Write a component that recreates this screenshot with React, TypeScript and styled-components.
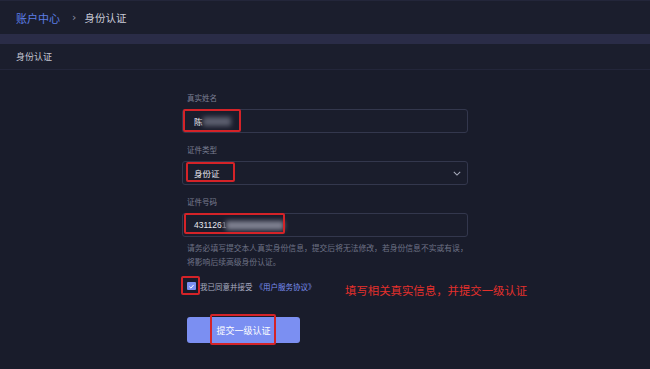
import React, { useState } from 'react';
import styled, { createGlobalStyle } from 'styled-components';

const GlobalStyle = createGlobalStyle`
  html, body {
    margin: 0;
    padding: 0;
    background: #191c2b;
  }
  body {
    font-family: "Noto Sans CJK SC", "Noto Sans", sans-serif;
  }
`

const App: React.FC = () => {
  const [agreed, setAgreed] = useState<boolean>(true)

  return (
    <Page>
      <GlobalStyle />
      <Header>
        <Crumb>账户中心</Crumb>
        <CrumbSep>›</CrumbSep>
        <CrumbCurrent>身份认证</CrumbCurrent>
      </Header>
      <Stripe />
      <SectionTitle>身份认证</SectionTitle>

      <Form>
        <Field>
          <Label>真实姓名</Label>
          <InputBox>
            <Value>陈<Blur width={28} tone="#6d7080" /></Value>
            <Mark left={0} top={-1} width={58} height={23} />
          </InputBox>
        </Field>

        <Field>
          <Label>证件类型</Label>
          <InputBox>
            <Value>身份证</Value>
            <Chevron viewBox="0 0 10 6" width="8" height="5">
              <path d="M1 1 L5 5 L9 1" fill="none" stroke="#a9acbd" strokeWidth="1.3" />
            </Chevron>
            <Mark left={3} top={0} width={49} height={20} />
          </InputBox>
        </Field>

        <Field>
          <Label>证件号码</Label>
          <InputBox>
            <Value>431126<Faded>1</Faded><Blur width={58} tone="#9a9cab" /></Value>
            <Mark left={1} top={-1} width={101} height={21} />
          </InputBox>
          <Hint>
            请务必填写提交本人真实身份信息，提交后将无法修改，若身份信息不实或有误，
            <br />
            将影响后续高级身份认证。
          </Hint>
        </Field>

        <AgreeRow>
          <CheckBox checked={agreed} onClick={() => setAgreed(!agreed)}>
            {agreed && (
              <svg viewBox="0 0 10 10" width="7" height="7">
                <path d="M2 5.2 L4.2 7.3 L8 2.8" fill="none" stroke="#ffffff" strokeWidth="1.4" />
              </svg>
            )}
          </CheckBox>
          <AgreeText>我已同意并接受</AgreeText>
          <AgreeLink>《用户服务协议》</AgreeLink>
          <Mark left={-1} top={-4} width={19} height={19} />
          <Note>填写相关真实信息，并提交一级认证</Note>
        </AgreeRow>

        <SubmitButton>
          提交一级认证
          <Mark left={23} top={-3} width={66} height={31} />
        </SubmitButton>
      </Form>
    </Page>
  );
}

const Page = styled.div`
  width: 650px;
  height: 369px;
  background: #191c2b;
  overflow: hidden;
`

const Header = styled.div`
  height: 34px;
  display: flex;
  align-items: center;
  padding-left: 16px;
  background: #1b1e2d;
  border-top: 1px solid #23263a;
  box-sizing: border-box;
`

const Crumb = styled.span`
  color: #5d7fe6;
  font-size: 11px;
`

const CrumbSep = styled.span`
  color: #8d90a3;
  font-size: 11px;
  margin: 0 8px 0 12px;
  font-family: "DejaVu Sans", sans-serif;
`

const CrumbCurrent = styled.span`
  color: #c9cbd8;
  font-size: 10.5px;
`

const Stripe = styled.div`
  height: 10px;
  background: #2a2c47;
`

const SectionTitle = styled.div`
  height: 25px;
  display: flex;
  align-items: center;
  padding-left: 16px;
  font-size: 9px;
  color: #c4c6d3;
  background: #1b1e2d;
  border-bottom: 1px solid #23263a;
`

const Form = styled.div`
  width: 286px;
  margin: 23px auto 0;
  display: flex;
  flex-direction: column;
`

const Field = styled.div`
  display: flex;
  flex-direction: column;
  margin-bottom: 12px;
`

const Label = styled.div`
  height: 10px;
  line-height: 10px;
  font-size: 7.5px;
  color: #7b7f93;
  padding-left: 5px;
  margin-bottom: 6px;
`

const InputBox = styled.div`
  position: relative;
  height: 24px;
  box-sizing: border-box;
  border: 1px solid #33374d;
  border-radius: 3px;
  background: #1a1d2c;
  display: flex;
  align-items: center;
  justify-content: space-between;
  padding: 0 6px 0 11px;
`

const Value = styled.span`
  display: flex;
  align-items: center;
  font-size: 8.5px;
  color: #e6e7ee;
  font-family: "Liberation Sans", "Noto Sans CJK SC", sans-serif;
`

const Faded = styled.span`
  opacity: 0.5;
`

const Blur = styled.span<{ width: number; tone: string }>`
  display: inline-block;
  width: ${({ width }) => width}px;
  height: 9px;
  background: ${({ tone }) => tone};
  filter: blur(2.5px);
  opacity: 0.8;
`

const Chevron = styled.svg`
  display: block;
`

const Mark = styled.span<{ left: number; top: number; width: number; height: number }>`
  position: absolute;
  left: ${({ left }) => left}px;
  top: ${({ top }) => top}px;
  width: ${({ width }) => width}px;
  height: ${({ height }) => height}px;
  box-sizing: border-box;
  border: 2px solid #d42328;
  border-radius: 2px;
  pointer-events: none;
`

const Hint = styled.div`
  margin-top: 4px;
  padding-left: 5px;
  font-size: 7.8px;
  line-height: 14px;
  color: #6e7286;
  white-space: nowrap;
`

const AgreeRow = styled.div`
  position: relative;
  display: flex;
  align-items: center;
  height: 12px;
  padding-left: 5px;
  margin-top: -1px;
  font-size: 7.5px;
`

const CheckBox = styled.span<{ checked: boolean }>`
  width: 9px;
  height: 8px;
  border-radius: 1px;
  background: ${({ checked }) => (checked ? '#7b90f2' : 'transparent')};
  border: ${({ checked }) => (checked ? 'none' : '1px solid #55596e')};
  display: flex;
  align-items: center;
  justify-content: center;
  margin-right: 4px;
  cursor: pointer;
`

const AgreeText = styled.span`
  color: #a9acc0;
`

const AgreeLink = styled.span`
  color: #7b8ff0;
  margin-left: 3px;
`

const Note = styled.span`
  position: absolute;
  left: 163px;
  top: 2px;
  font-size: 11.4px;
  color: #e5302b;
  white-space: nowrap;
`

const SubmitButton = styled.button`
  position: relative;
  width: 113px;
  height: 26px;
  margin: 25px 0 0 5px;
  border: none;
  border-radius: 3px;
  background: #7b8ff2;
  color: #ffffff;
  font-size: 9px;
  font-family: "Noto Sans CJK SC", sans-serif;
  padding: 0;
  cursor: pointer;
`

export default App;
